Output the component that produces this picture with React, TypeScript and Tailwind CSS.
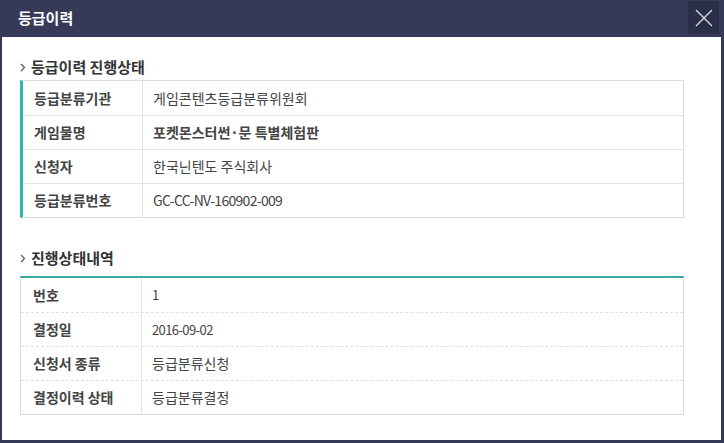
const font = { fontFamily: '"Noto Sans CJK KR", "Noto Sans", sans-serif' };

const info = [
  { label: "등급분류기관", value: "게임콘텐츠등급분류위원회" },
  { label: "게임물명", value: "포켓몬스터썬·문 특별체험판", bold: true },
  { label: "신청자", value: "한국닌텐도 주식회사" },
  { label: "등급분류번호", value: "GC-CC-NV-160902-009", latin: true },
];

const history = [
  { label: "번호", value: "1", latin: true },
  { label: "결정일", value: "2016-09-02", latin: true },
  { label: "신청서 종류", value: "등급분류신청" },
  { label: "결정이력 상태", value: "등급분류결정" },
];

function SectionTitle({ children }: { children: string }) {
  return (
    <h3 className="flex items-center gap-[5px] text-[15px] font-bold text-[#333] leading-none">
      <svg width="6" height="9" viewBox="0 0 6 9" className="mt-[1px]">
        <path d="M1 1l3.5 3.5L1 8" fill="none" stroke="#555" strokeWidth="1.2" />
      </svg>
      {children}
    </h3>
  );
}

export default function App() {
  return (
    <div className="w-[724px] h-[443px] bg-[#363958] flex flex-col pl-[2px] pr-[3px] pb-[3px]" style={font}>
      <div className="h-[37px] flex items-center justify-between shrink-0">
        <h2 className="pl-[16px] text-white text-[15px] font-bold">등급이력</h2>
        <button className="w-[31px] h-[33px] mt-[-2px] mr-[2px] bg-[#2b2e48] flex items-center justify-center">
          <svg width="18" height="18" viewBox="0 0 18 18">
            <path d="M1 1l16 16M17 1L1 17" stroke="#d8d9e0" strokeWidth="1.4" />
          </svg>
        </button>
      </div>
      <div className="flex-1 bg-white pl-[18px] pr-[37px] pt-[22px]">
        <SectionTitle>등급이력 진행상태</SectionTitle>
        <div className="mt-[6px] border border-[#dcdcdc] border-l-[3px] border-l-[#2fb5ab]">
          {info.map((r, i) => (
            <div
              key={r.label}
              className={`flex h-[34px] ${i > 0 ? "border-t border-[#e3e3e3]" : ""}`}
            >
              <div className="w-[120px] shrink-0 flex items-center pl-[11px] text-[14px] font-bold text-[#444] border-r border-[#e3e3e3]">
                {r.label}
              </div>
              <div
                className={`flex items-center pl-[10px] text-[#444] ${r.bold ? "font-bold" : ""} ${r.latin ? "text-[14px] tracking-[-0.7px]" : "text-[14px]"}`}
              >
                {r.value}
              </div>
            </div>
          ))}
        </div>
        <div className="mt-[32px]">
          <SectionTitle>진행상태내역</SectionTitle>
        </div>
        <div className="mt-[11px] border border-[#dcdcdc] border-t-2 border-t-[#3aaaa5]">
          {history.map((r, i) => (
            <div
              key={r.label}
              className={`flex h-[34px] ${i > 0 ? "border-t border-dashed border-[#e0e0e0]" : ""}`}
            >
              <div className="w-[121px] shrink-0 flex items-center pl-[12px] text-[14px] font-bold text-[#444] border-r border-[#e3e3e3]">
                {r.label}
              </div>
              <div
                className={`flex items-center pl-[10px] text-[#444] ${r.latin ? "text-[13px] tracking-[-0.6px]" : "text-[14px]"}`}
              >
                {r.value}
              </div>
            </div>
          ))}
        </div>
      </div>
    </div>
  );
}
